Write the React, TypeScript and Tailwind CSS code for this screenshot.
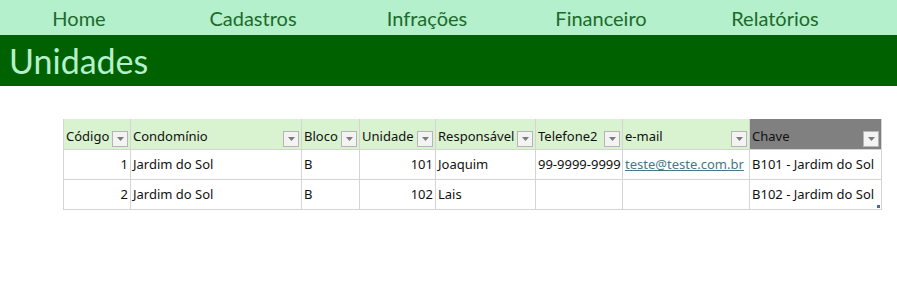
import * as React from "react";

const navItems = ["Home", "Cadastros", "Infrações", "Financeiro", "Relatórios"];

const columns = [
  { label: "Código", width: 67 },
  { label: "Condomínio", width: 171 },
  { label: "Bloco", width: 58 },
  { label: "Unidade", width: 76 },
  { label: "Responsável", width: 100 },
  { label: "Telefone2", width: 87 },
  { label: "e-mail", width: 127 },
  { label: "Chave", width: 132 },
];

const rows = [
  { id: 1, condominio: "Jardim do Sol", bloco: "B", unidade: 101, responsavel: "Joaquim", telefone: "99-9999-9999", email: "teste@teste.com.br", chave: "B101 - Jardim do Sol" },
  { id: 2, condominio: "Jardim do Sol", bloco: "B", unidade: 102, responsavel: "Lais", telefone: "", email: "", chave: "B102 - Jardim do Sol" },
];

const FilterButton = () => (
  <span className="flex h-[16px] w-[16px] shrink-0 items-center justify-center border border-[#b5b5b5] bg-[#f3f3f3]">
    <svg width="7" height="4" viewBox="0 0 7 4">
      <path d="M0 0 L7 0 L3.5 4 Z" fill="#7a7a7a" />
    </svg>
  </span>
);

const cell = "border border-[#d4d4d4] px-[2px] pt-[2px] h-[30px] whitespace-nowrap overflow-hidden";

export default function App() {
  return (
    <div className="h-[287px] w-[897px] bg-white">
      <div className="flex h-[35px] items-center bg-[#b3f0cb] font-['Lato',sans-serif] text-[20px] text-[#1d6a2b]">
        <div className="-ml-[8px] grid grid-cols-[repeat(5,174px)]">
          {navItems.map((item) => (
            <span key={item} className="text-center">
              {item}
            </span>
          ))}
        </div>
      </div>

      <div className="flex h-[51px] items-center bg-[#006100] pl-[9px] font-['Lato',sans-serif] text-[34px] leading-none text-[#b3f0cb]">
        Unidades
      </div>

      <div className="pl-[63px] pt-[33px]">
        <table className="w-[818px] table-fixed border-collapse font-['Noto_Sans',sans-serif] text-[13px] text-[#111]">
          <colgroup>
            {columns.map((c) => (
              <col key={c.label} style={{ width: c.width }} />
            ))}
          </colgroup>
          <thead>
            <tr>
              {columns.map((c) => (
                <th
                  key={c.label}
                  className={`${c.label === "Chave" ? "bg-[#808080]" : "bg-[#d9f2d0]"} border-x border-x-[#d4d4d4] px-[2px] pb-[2px] h-[30px] text-left font-normal align-bottom`}
                >
                  <div className="flex items-end justify-between">
                    <span className="pb-[2px] leading-[18px]">{c.label}</span>
                    <FilterButton />
                  </div>
                </th>
              ))}
            </tr>
          </thead>
          <tbody>
            {rows.map((r, i) => (
              <tr key={r.id}>
                <td className={`${cell} text-right`}>{r.id}</td>
                <td className={cell}>{r.condominio}</td>
                <td className={cell}>{r.bloco}</td>
                <td className={`${cell} text-right`}>{r.unidade}</td>
                <td className={cell}>{r.responsavel}</td>
                <td className={cell}>{r.telefone}</td>
                <td className={cell}>
                  {r.email && <span className="text-[#467886] underline">{r.email}</span>}
                </td>
                <td className={`${cell} relative`}>
                  {r.chave}
                  {i === rows.length - 1 && (
                    <span className="absolute bottom-[1px] right-[1px] h-[3px] w-[3px] bg-[#4a6b9a]" />
                  )}
                </td>
              </tr>
            ))}
          </tbody>
        </table>
      </div>
    </div>
  );
}
